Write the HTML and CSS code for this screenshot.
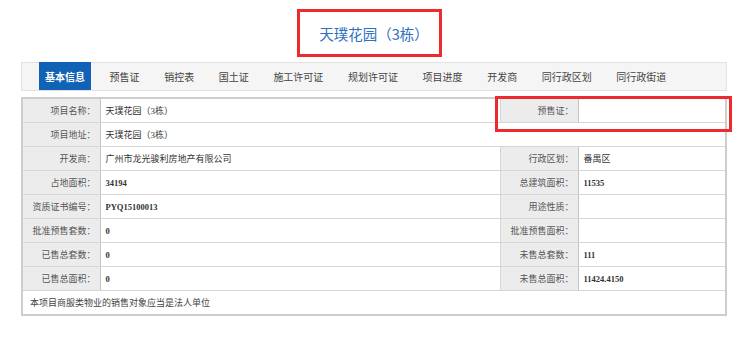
FILE: index.html
```html
<!DOCTYPE html>
<html lang="zh-CN">
<head>
  <meta charset="UTF-8" />
  <title>天璞花园（3栋）</title>
  <link rel="stylesheet" href="styles.css">
</head>
<body>
  <header class="title-bar">
    <h1 class="title">天璞花园（3栋）</h1>
  </header>
  <nav class="tabs">
    <a class="tab active" href="#">基本信息</a>
    <a class="tab" href="#">预售证</a>
    <a class="tab" href="#">销控表</a>
    <a class="tab" href="#">国土证</a>
    <a class="tab" href="#">施工许可证</a>
    <a class="tab" href="#">规划许可证</a>
    <a class="tab" href="#">项目进度</a>
    <a class="tab" href="#">开发商</a>
    <a class="tab" href="#">同行政区划</a>
    <a class="tab" href="#">同行政街道</a>
  </nav>
  <section class="info">
    <table class="info-table">
      <colgroup>
        <col class="c-label">
        <col class="c-value">
        <col class="c-label">
        <col class="c-value2">
      </colgroup>
      <tr>
        <th>项目名称：</th><td>天璞花园（3栋）</td>
        <th>预售证：</th><td></td>
      </tr>
      <tr>
        <th>项目地址：</th><td colspan="3">天璞花园（3栋）</td>
      </tr>
      <tr>
        <th>开发商：</th><td>广州市龙光骏利房地产有限公司</td>
        <th>行政区划：</th><td>番禺区</td>
      </tr>
      <tr>
        <th>占地面积：</th><td class="num">34194</td>
        <th>总建筑面积：</th><td class="num">11535</td>
      </tr>
      <tr>
        <th>资质证书编号：</th><td class="num">PYQ15100013</td>
        <th>用途性质：</th><td></td>
      </tr>
      <tr>
        <th>批准预售套数：</th><td class="num">0</td>
        <th>批准预售面积：</th><td></td>
      </tr>
      <tr>
        <th>已售总套数：</th><td class="num">0</td>
        <th>未售总套数：</th><td class="num">111</td>
      </tr>
      <tr>
        <th>已售总面积：</th><td class="num">0</td>
        <th>未售总面积：</th><td class="num">11424.4150</td>
      </tr>
      <tr>
        <td class="note" colspan="4">本项目商服类物业的销售对象应当是法人单位</td>
      </tr>
    </table>
    <div class="mark"></div>
  </section>
</body>
</html>
```

FILE: styles.css
```css
body {
  margin: 0;
  padding: 0;
  background-color: #fff;
  font-family: "Noto Sans CJK SC", sans-serif;
  color: #333;
}
.title-bar {
  padding: 9px 4px 0 0;
  text-align: center;
}
.title {
  display: inline-block;
  margin: 0;
  padding: 0 10px 0 19px;
  height: 42px;
  line-height: 44px;
  border: 3px solid #ec2a30;
  color: #2f70c0;
  font-size: 14.5px;
  font-weight: normal;
}
.tabs {
  display: flex;
  gap: 12.6px;
  margin: 5px 16px 0 21px;
  padding: 0 0 0 17px;
  height: 27px;
  background-color: #f5f5f5;
  border: 1px solid #e2e2e2;
}
.tab {
  display: block;
  padding: 0 6px;
  line-height: 28px;
  color: #444;
  font-size: 10px;
  text-decoration: none;
}
.tab.active {
  background-color: #1162b4;
  color: #fff;
  font-weight: bold;
  margin-top: -1px;
  line-height: 29px;
}
.info {
  position: relative;
  margin: 6px 16px 0 21px;
}
.info-table {
  width: 100%;
  table-layout: fixed;
  border-collapse: collapse;
  border: 2px solid #cdcdcd;
  font-family: "Liberation Serif", "Noto Sans CJK SC", serif;
  font-size: 9px;
}
.c-label {
  width: 78px;
}
.c-value2 {
  width: 148px;
}
.info-table th,
.info-table td {
  height: 23px;
  padding: 0;
  border: 1px solid #d6d6d6;
  font-weight: normal;
  white-space: nowrap;
}
.info-table th {
  background-color: #ececec;
  color: #555;
  text-align: right;
  padding-right: 4px;
  border-right-color: #c4c4c4;
}
.info-table td {
  color: #333;
  text-align: left;
  padding-left: 5px;
}
.info-table td.num {
  font-size: 8.5px;
  font-weight: bold;
  color: #333;
}
.info-table td.note {
  padding-left: 7px;
  color: #444;
}
.mark {
  position: absolute;
  left: 474px;
  top: -1px;
  width: 231px;
  height: 30px;
  border: 3px solid #ec2a30;
}
```
